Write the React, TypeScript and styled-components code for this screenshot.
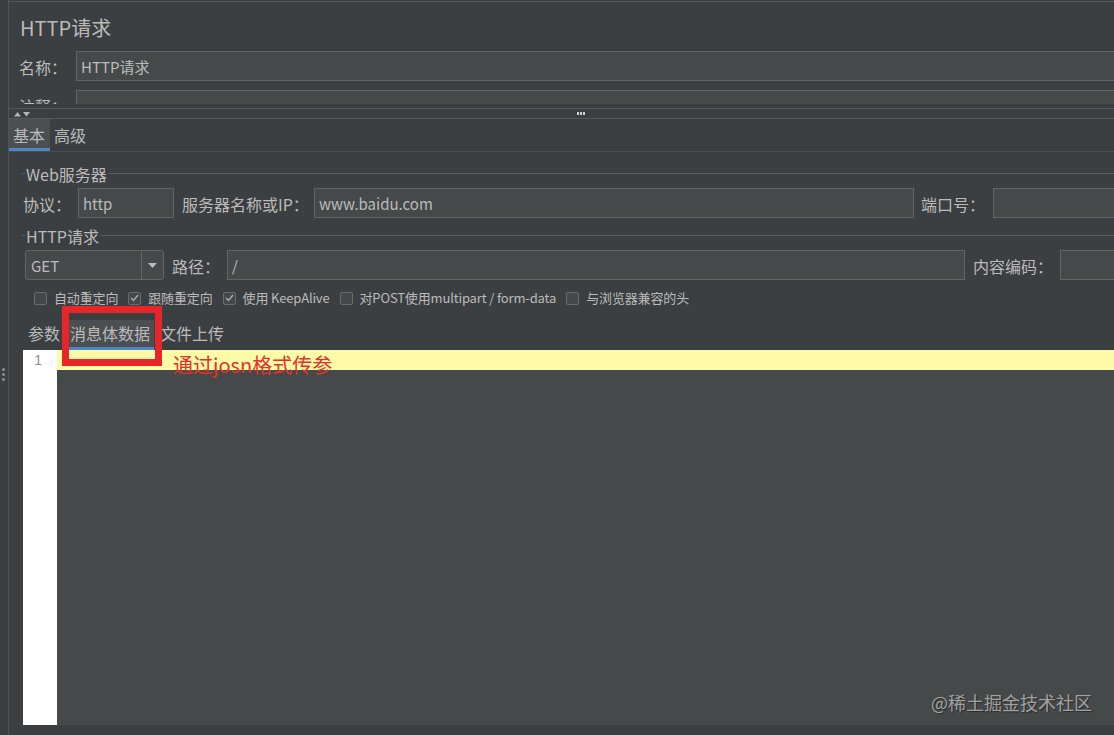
import React from "react";
import styled, { createGlobalStyle } from "styled-components";

const GlobalStyle = createGlobalStyle`
  html, body { margin: 0; padding: 0; background: #3c3f41; }
  body { font-family: "Noto Sans CJK SC", "Noto Sans", sans-serif; color: #bbbbbb; }
  * { box-sizing: border-box; }
`;

const Frame = styled.div`
  position: relative;
  width: 1114px;
  height: 735px;
  overflow: hidden;
  display: flex;
  background: #3c3f41;
`;

const SideStrip = styled.div`
  width: 9px;
  flex-shrink: 0;
  border-right: 1px solid #505355;
  display: flex;
  flex-direction: column;
  align-items: center;
  padding-top: 368px;
  padding-right: 1px;
  gap: 2px;
`;

const Dot = styled.span`
  width: 3px;
  height: 3px;
  border-radius: 50%;
  background: #8e8e8e;
`;

const Main = styled.div`
  flex: 1;
  min-width: 0;
  display: flex;
  flex-direction: column;
  padding-top: 1px;
`;

const TopSection = styled.div`
  height: 103px;
  overflow: hidden;
  border-top: 1px solid #55585a;
  padding: 13px 0 0 10px;
  display: flex;
  flex-direction: column;
`;

const Title = styled.div`
  font-size: 20px;
  line-height: 25px;
  height: 25px;
  margin-left: 1px;
  color: #bbbbbb;
`;

const FieldRow = styled.div<{ $mt?: number; $pl?: number }>`
  display: flex;
  align-items: center;
  flex-shrink: 0;
  margin-top: ${(p) => p.$mt ?? 0}px;
  padding-left: ${(p) => p.$pl ?? 0}px;
`;

const Label = styled.span<{ $w?: number; $pl?: number }>`
  flex-shrink: 0;
  font-size: 16px;
  line-height: 22px;
  padding-top: 2px;
  white-space: nowrap;
  color: #bbbbbb;
  width: ${(p) => (p.$w ? `${p.$w}px` : "auto")};
  padding-left: ${(p) => p.$pl ?? 0}px;
`;

const TextBox = styled.div<{ $w?: number; $grow?: boolean }>`
  flex-shrink: 0;
  height: 30px;
  background: #45494a;
  border: 1px solid #646464;
  padding: 1px 4px 0;
  font-size: 15px;
  line-height: 28px;
  color: #bbbbbb;
  white-space: nowrap;
  overflow: hidden;
  width: ${(p) => (p.$w ? `${p.$w}px` : "auto")};
  ${(p) => (p.$grow ? "flex: 1; margin-right: -12px;" : "")}
`;

const Splitter = styled.div`
  margin-top: 4px;
  height: 11px;
  flex-shrink: 0;
  border-top: 1px solid #55585a;
  border-bottom: 1px solid #55585a;
  display: flex;
  align-items: center;
  padding-left: 5px;
`;

const Grip = styled.div`
  display: flex;
  gap: 1px;
  margin-left: 546px;
`;

const GripDot = styled.span`
  width: 2px;
  height: 3px;
  background: #cfcfcf;
`;

const TabBar = styled.div`
  display: flex;
  height: 33px;
  flex-shrink: 0;
  border-bottom: 1px solid #4b4e50;
`;

const Tab = styled.div<{ $active?: boolean }>`
  height: 32px;
  padding: 1px 5px 0 4px;
  font-size: 16px;
  line-height: 30px;
  color: #bbbbbb;
  background: ${(p) => (p.$active ? "#4b4f52" : "transparent")};
  border-bottom: 3px solid ${(p) => (p.$active ? "#4a88c7" : "transparent")};
`;

const Panel = styled.div`
  flex: 1;
  min-height: 0;
  display: flex;
  flex-direction: column;
  padding: 12px 0 0 13px;
`;

const GroupTitle = styled.div<{ $mt?: number }>`
  display: flex;
  align-items: center;
  height: 20px;
  flex-shrink: 0;
  margin-top: ${(p) => p.$mt ?? 0}px;
  font-size: 16px;
  line-height: 20px;
  color: #bbbbbb;
  &::before {
    content: "";
    width: 3px;
    height: 1px;
    margin: -1px 1px 0 0;
    background: #5b5e60;
  }
  &::after {
    content: "";
    flex: 1;
    height: 1px;
    margin: -1px 0 0 2px;
    background: #5b5e60;
  }
`;

const Combo = styled.div`
  flex-shrink: 0;
  width: 139px;
  height: 30px;
  margin-left: 2px;
  display: flex;
  border: 1px solid #646464;
  border-radius: 3px;
  background: #45494a;
  overflow: hidden;
`;

const ComboValue = styled.div`
  flex: 1;
  padding: 1px 0 0 5px;
  font-size: 15px;
  line-height: 28px;
  color: #bbbbbb;
`;

const ComboArrow = styled.div`
  width: 22px;
  border-left: 1px solid #646464;
  display: flex;
  align-items: center;
  justify-content: center;
`;

const CheckRow = styled.div`
  display: flex;
  align-items: center;
  height: 20px;
  margin-top: 8px;
  padding-left: 12px;
  gap: 10px;
  flex-shrink: 0;
`;

const CheckItem = styled.label`
  display: flex;
  align-items: center;
  gap: 7px;
  font-size: 13px;
  line-height: 20px;
  letter-spacing: -0.15px;
  color: #bbbbbb;
  white-space: nowrap;
`;

const Box = styled.span`
  width: 13px;
  height: 13px;
  border: 1px solid #6b6b6b;
  border-radius: 2px;
  background: #43494a;
  display: flex;
  align-items: center;
  justify-content: center;
`;

const SubTabs = styled.div`
  display: flex;
  gap: 2px;
  margin: 12px 0 0 2px;
  height: 30px;
  flex-shrink: 0;
`;

const SubTab = styled.div<{ $active?: boolean }>`
  height: 30px;
  padding: 0 4px;
  font-size: 16px;
  line-height: 27px;
  color: #bbbbbb;
  background: ${(p) => (p.$active ? "#4b4f52" : "transparent")};
  border-bottom: 3px solid ${(p) => (p.$active ? "#4a88c7" : "transparent")};
`;

const Editor = styled.div`
  flex: 1;
  min-height: 0;
  display: flex;
  margin: 0 0 10px 1px;
`;

const Gutter = styled.div`
  width: 34px;
  flex-shrink: 0;
  background: #ffffff;
  text-align: right;
  padding: 0 15px 0 0;
  font-family: "Liberation Sans", sans-serif;
  font-size: 14px;
  line-height: 20px;
  color: #8a8a8a;
`;

const EditorBody = styled.div`
  flex: 1;
  background: #45494a;
`;

const CurrentLine = styled.div`
  height: 20px;
  background: #fdfaa8;
`;

const RedBox = styled.div`
  position: absolute;
  left: 62px;
  top: 306px;
  width: 100px;
  height: 60px;
  border: 7px solid #e8262a;
`;

const RedNote = styled.div`
  position: absolute;
  left: 173px;
  top: 351px;
  font-size: 20px;
  line-height: 27px;
  color: #e5302b;
  white-space: nowrap;
`;

const Watermark = styled.div`
  position: absolute;
  left: 931px;
  top: 689px;
  font-size: 18px;
  line-height: 26px;
  color: #a2a2a2;
  text-shadow: 1px 1px 1px rgba(0, 0, 0, 0.45);
  white-space: nowrap;
`;

const Check = () => (
  <svg width="9" height="8" viewBox="0 0 9 8">
    <polyline points="1,4 3.5,6.5 8,1" fill="none" stroke="#a9a9a9" strokeWidth="1.5" />
  </svg>
);

const CheckBox: React.FC<{ checked?: boolean; label: string }> = ({ checked, label }) => (
  <CheckItem>
    <Box>{checked && <Check />}</Box>
    {label}
  </CheckItem>
);

export default function App() {
  return (
    <>
      <GlobalStyle />
      <Frame>
        <SideStrip>
          <Dot />
          <Dot />
          <Dot />
        </SideStrip>
        <Main>
          <TopSection>
            <Title>HTTP请求</Title>
            <FieldRow $mt={11}>
              <Label $w={57}>名称：</Label>
              <TextBox $grow>HTTP请求</TextBox>
            </FieldRow>
            <FieldRow $mt={9}>
              <Label $w={57}>注释：</Label>
              <TextBox $grow />
            </FieldRow>
          </TopSection>
          <Splitter>
            <svg width="17" height="6" viewBox="0 0 17 6">
              <polygon points="0,5.5 3.5,1 7,5.5" fill="#b5b5b5" />
              <polygon points="9,1 16,1 12.5,5.5" fill="#b5b5b5" />
            </svg>
            <Grip>
              <GripDot />
              <GripDot />
              <GripDot />
            </Grip>
          </Splitter>
          <TabBar>
            <Tab $active>基本</Tab>
            <Tab>高级</Tab>
          </TabBar>
          <Panel>
            <GroupTitle>Web服务器</GroupTitle>
            <FieldRow $mt={4} $pl={1}>
              <Label $w={55}>协议：</Label>
              <TextBox $w={96}>http</TextBox>
              <Label $w={140} $pl={8}>服务器名称或IP：</Label>
              <TextBox $w={600}>www.baidu.com</TextBox>
              <Label $w={79} $pl={7}>端口号：</Label>
              <TextBox $w={150} />
            </FieldRow>
            <GroupTitle $mt={8}>HTTP请求</GroupTitle>
            <FieldRow $mt={4} $pl={1}>
              <Combo>
                <ComboValue>GET</ComboValue>
                <ComboArrow>
                  <svg width="9" height="5" viewBox="0 0 9 5">
                    <polygon points="0,0 9,0 4.5,5" fill="#bbbbbb" />
                  </svg>
                </ComboArrow>
              </Combo>
              <Label $w={63} $pl={8}>路径：</Label>
              <TextBox $w={738}>/</TextBox>
              <Label $w={95} $pl={8}>内容编码：</Label>
              <TextBox $w={150} />
            </FieldRow>
            <CheckRow>
              <CheckBox label="自动重定向" />
              <CheckBox checked label="跟随重定向" />
              <CheckBox checked label="使用 KeepAlive" />
              <CheckBox label="对POST使用multipart / form-data" />
              <CheckBox label="与浏览器兼容的头" />
            </CheckRow>
            <SubTabs>
              <SubTab>参数</SubTab>
              <SubTab $active>消息体数据</SubTab>
              <SubTab>文件上传</SubTab>
            </SubTabs>
            <Editor>
              <Gutter>1</Gutter>
              <EditorBody>
                <CurrentLine />
              </EditorBody>
            </Editor>
          </Panel>
        </Main>
        <RedBox />
        <RedNote>通过josn格式传参</RedNote>
        <Watermark>@稀土掘金技术社区</Watermark>
      </Frame>
    </>
  );
}
